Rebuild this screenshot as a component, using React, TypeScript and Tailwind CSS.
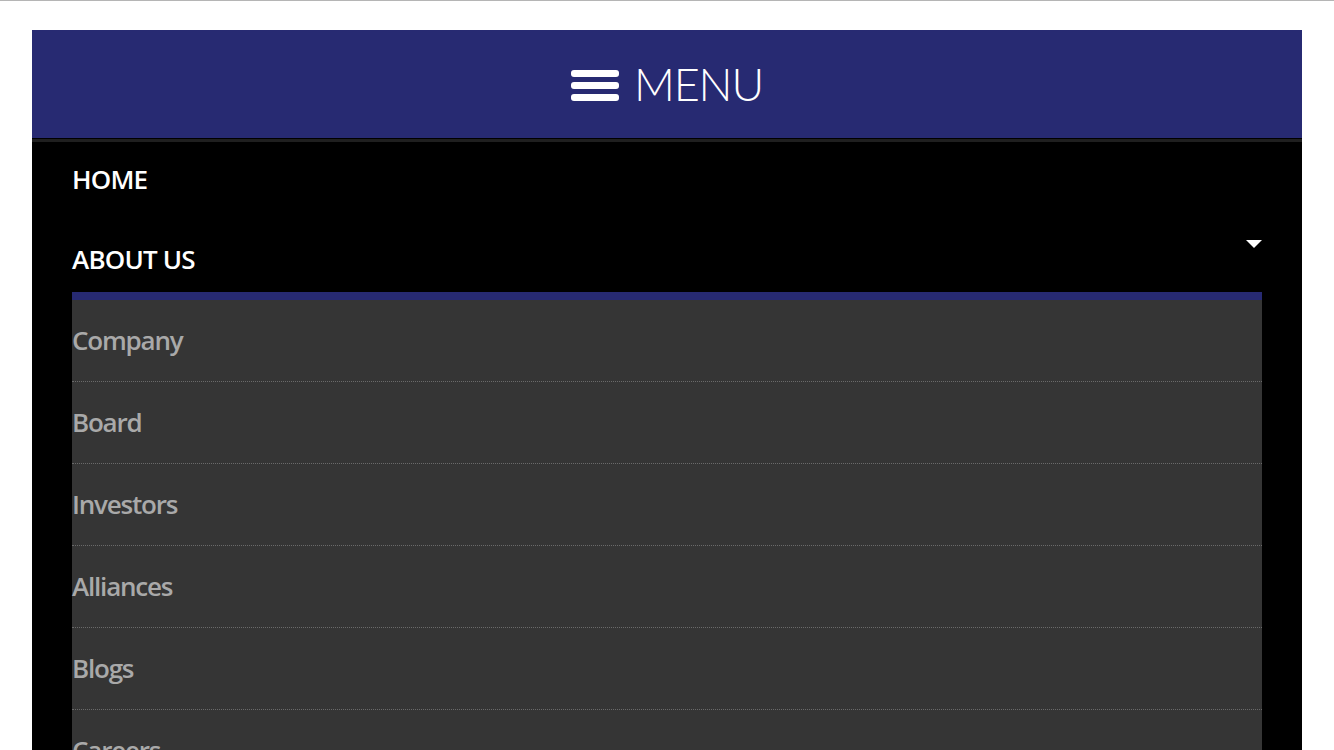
import React from "react";

const subItems = ["Company", "Board", "Investors", "Alliances", "Blogs", "Careers"];

export default function App() {
  return (
    <div
      className="h-[750px] overflow-hidden bg-white border-t border-[#b5b5b5] pt-[29px]"
      style={{ fontFamily: '"Open Sans", "Noto Sans", sans-serif' }}
    >
      <div className="mx-[32px]">
        <header className="h-[108px] bg-[#272a72] flex items-center justify-center gap-[15px]">
          <div className="flex flex-col gap-[5px] w-[48px] mt-[2px]">
            <span className="block h-[7px] rounded-[3px] bg-white" />
            <span className="block h-[7px] rounded-[3px] bg-white" />
            <span className="block h-[7px] rounded-[3px] bg-white" />
          </div>
          <span
            className="text-white text-[45px] leading-none font-light tracking-[-1.2px]"
            style={{ fontFamily: 'Lato, "Open Sans", sans-serif' }}
          >
            MENU
          </span>
        </header>
        <div className="h-[1px] bg-black" />
        <div className="h-[3px] bg-[#1f1f1f]" />
        <nav className="bg-black px-[40px]">
          <div className="pt-[19px] pb-[25px] leading-[36px] text-[26px] font-semibold text-white tracking-[-0.8px]">
            HOME
          </div>
          <div className="relative pt-[19px] pb-[15px] leading-[36px] text-[26px] font-semibold text-white tracking-[-0.8px]">
            ABOUT US
            <span className="absolute right-0 top-[18px] w-0 h-0 border-l-[8px] border-r-[8px] border-t-[8px] border-l-transparent border-r-transparent border-t-white" />
          </div>
          <ul className="border-t-[8px] border-[#272a72] bg-[#353535]">
            {subItems.map((s) => (
              <li
                key={s}
                className="pt-[22px] pb-[23px] leading-[36px] text-[26px] font-semibold text-[#a9a9a9] tracking-[-1.2px] border-b border-dotted border-b-[#6a6a6a]"
              >
                {s}
              </li>
            ))}
          </ul>
        </nav>
      </div>
    </div>
  );
}
